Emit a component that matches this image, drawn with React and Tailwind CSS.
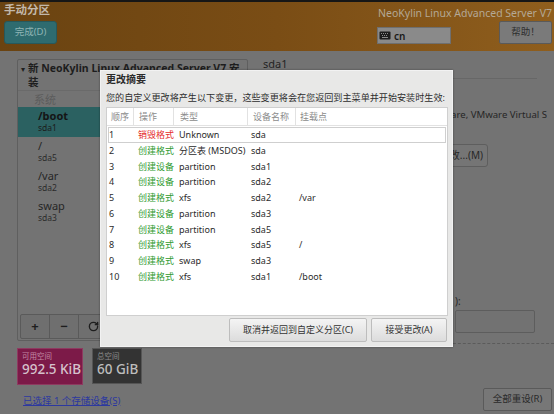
import React from "react";
import { RotateCw } from "lucide-react";

const rows = [
  ["1", "销毁格式", "Unknown", "sda", "", "red"],
  ["2", "创建格式", "分区表 (MSDOS)", "sda", ""],
  ["3", "创建设备", "partition", "sda1", ""],
  ["4", "创建设备", "partition", "sda2", ""],
  ["5", "创建格式", "xfs", "sda2", "/var"],
  ["6", "创建设备", "partition", "sda3", ""],
  ["7", "创建设备", "partition", "sda5", ""],
  ["8", "创建格式", "xfs", "sda5", "/"],
  ["9", "创建格式", "swap", "sda3", ""],
  ["10", "创建格式", "xfs", "sda1", "/boot"],
];

function Kbd() {
  return (
    <svg width="12" height="9" viewBox="0 0 12 9">
      <rect x="0.5" y="0.5" width="11" height="8" rx="1" fill="#1c1c1c" />
      <g fill="#8a8a8a">
        <rect x="2" y="2" width="1" height="1" />
        <rect x="4" y="2" width="1" height="1" />
        <rect x="6" y="2" width="1" height="1" />
        <rect x="8" y="2" width="1" height="1" />
        <rect x="3" y="4" width="1" height="1" />
        <rect x="5" y="4" width="1" height="1" />
        <rect x="7" y="4" width="1" height="1" />
        <rect x="3" y="6" width="6" height="1" />
      </g>
    </svg>
  );
}

export default function App() {
  return (
    <div className="relative w-[554px] h-[414px] overflow-hidden bg-[#737373] font-['Noto_Sans','Noto_Sans_CJK_SC',sans-serif]">
      {/* Header */}
      <div className="h-[51px] border-t-2 border-[#161616] bg-gradient-to-r from-[#6a4311] via-[#7a4d15] to-[#8f5e1d] flex justify-between pl-[4px] pr-[2px]">
        <div className="flex flex-col">
          <div className="text-[11.5px] leading-[14px] font-bold text-[#c2b8ab] mt-[1px]">手动分区</div>
          <div className="mt-[4px] w-[53px] h-[23px] rounded-[3px] bg-[#2e6b6f] border border-[#27585b] flex items-center justify-center text-[9.5px] text-[#8fb5b5]">
            完成(D)
          </div>
        </div>
        <div className="flex flex-col items-end">
          <div className="text-[10.5px] leading-[13px] text-[#b4a895] mt-[5px] whitespace-nowrap">
            NeoKylin Linux Advanced Server V7
          </div>
          <div className="flex items-end mt-[1px] gap-[48px]">
            <div className="w-[74px] h-[17px] bg-[#8a8a8a] border border-[#6f6f6f] flex items-center pl-[1px] gap-[3px] text-[10px] text-[#1a1a1a]">
              <Kbd />
              <span className="leading-none font-semibold">cn</span>
            </div>
            <div className="w-[53px] h-[23px] rounded-[2px] bg-[#7a7a7a] border border-[#5a5a5a] flex items-center justify-center text-[9.5px] text-[#2e2e2e]">
              帮助！
            </div>
          </div>
        </div>
      </div>

      {/* Body */}
      <div className="flex h-[363px]">
        {/* Left column */}
        <div className="pl-[17px] w-[248px] flex flex-col">
          <div className="mt-[8px] h-[282px] border border-[#5f5f5f] rounded-[2px] flex flex-col">
            <div className="border-b border-[#6a6a6a] pt-[1px] pb-[1px] flex">
              <span className="text-[8px] text-[#1f1f1f] ml-[3px] mr-[3px] mt-[2px]">▾</span>
              <div className="text-[10.5px] leading-[14px] font-bold text-[#1d1d1d] whitespace-nowrap">
                新 NeoKylin Linux Advanced Server V7 安<br />装
              </div>
            </div>
            <div className="pl-[16px] text-[11px] leading-[12px] text-[#5c5c5c] mt-[3px]">系统</div>
            <div className="mt-[1px] flex-1 flex flex-col">
              <div className="h-[30px] bg-[#2b6161] pl-[20px] pt-[2px]">
                <div className="text-[11px] leading-[13px] font-bold text-[#151515]">/boot</div>
                <div className="text-[8.5px] leading-[11px] text-[#1b1b1b]">sda1</div>
              </div>
              {[
                ["/", "sda5"],
                ["/var", "sda2"],
                ["swap", "sda3"],
              ].map(([m, d]) => (
                <div key={m} className="h-[30px] pl-[20px] pt-[2px]">
                  <div className="text-[11px] leading-[13px] text-[#262626]">{m}</div>
                  <div className="text-[8.5px] leading-[11px] text-[#2b2b2b]">{d}</div>
                </div>
              ))}
            </div>
            <div className="h-[25px] mx-[2px] mb-[1px] flex border border-[#5a5a5a] rounded-[2px] bg-[#6f6f6f]">
              <div className="w-[29px] flex items-center justify-center border-r border-[#5a5a5a] text-[13px] text-[#1e1e1e] font-bold">+</div>
              <div className="w-[29px] flex items-center justify-center border-r border-[#5a5a5a] text-[13px] text-[#1e1e1e] font-bold">−</div>
              <div className="w-[29px] flex items-center justify-center border-r border-[#5a5a5a]">
                <RotateCw size={11} strokeWidth={3} color="#1e1e1e" />
              </div>
            </div>
          </div>
          <div className="mt-[7px] flex gap-[9px]">
            <div className="w-[66px] h-[37px] bg-[#7c1a48] border border-[#8e3a60] pl-[4px] pt-[2px]">
              <div className="text-[7.5px] leading-[10px] text-[#c28aa4]">可用空间</div>
              <div className="text-[13.5px] leading-[17px] text-[#d6c2cc] font-medium">992.5 KiB</div>
            </div>
            <div className="w-[50px] h-[36px] bg-[#333333] border border-[#555555] pl-[4px] pt-[2px]">
              <div className="text-[7.5px] leading-[10px] text-[#8c8c8c]">总空间</div>
              <div className="text-[13.5px] leading-[17px] text-[#bdbdbd] font-medium">60 GiB</div>
            </div>
          </div>
          <div className="mt-[10px] pl-[6px] text-[9.5px] leading-[12px] text-[#2c38a0] underline whitespace-nowrap">
            已选择 1 个存储设备(S)
          </div>
        </div>

        {/* Right column */}
        <div className="flex-1 pl-[15px] flex flex-col">
          <div className="mt-[6px] text-[11px] leading-[14px] text-[#232323]">sda1</div>
          <div className="mt-[7px] w-[274px] border-b border-[#676767]"></div>
          <div className="mt-[29px] w-[284px] overflow-hidden whitespace-nowrap text-[9.6px] leading-[13px] text-[#262626] flex justify-end">
            <span>设备：VMware, VMware Virtual S</span>
          </div>
          <div className="mt-[23px] w-[225px] h-[23px] rounded-[3px] border border-[#5e5e5e] bg-[#757575] flex items-center justify-end pr-[4px] text-[10px] text-[#262626]">
            修改...(M)
          </div>
          <div className="flex-1"></div>
          <div className="flex flex-col items-end">
            <div className="w-[99px] text-[10px] leading-[12px] text-[#262626]">):</div>
            <div className="mt-[3px] w-[99px] flex justify-start">
              <div className="w-[80px] h-[23px] border border-[#5d5d5d] rounded-[2px] bg-[#727272]"></div>
            </div>
            <div className="mt-[10px] w-[101px] border-t border-dashed border-[#5b5b5b]"></div>
            <div className="mt-[44px] mr-[2px] w-[69px] h-[23px] rounded-[2px] border border-[#5a5a5a] bg-[#777777] flex items-center justify-center text-[9.5px] text-[#2a2a2a]">
              全部重设(R)
            </div>
            <div className="h-[3px]"></div>
          </div>
        </div>
      </div>

      {/* Dialog */}
      <div className="absolute left-[100px] top-[70px] w-[353px] h-[277px] bg-[#e8e8e7] border border-[#f2f2f2] shadow-[0_0_2px_rgba(0,0,0,0.4)] flex flex-col px-[5px]">
        <div className="mt-[2px] text-[10px] leading-[12px] font-bold text-[#2b2b2b]">更改摘要</div>
        <div className="mt-[7px] text-[9.1px] leading-[12px] text-[#2e2e2e] whitespace-nowrap">
          您的自定义更改将产生以下变更，这些变更将会在您返回到主菜单并开始安装时生效:
        </div>
        <div className="mt-[3px] w-[342px] h-[209px] bg-white border border-[#cfcfcf] flex flex-col">
          <div className="h-[18px] grid grid-cols-[27px_40px_74px_48px_1fr] border-b border-[#e2e2e2] text-[9px] text-[#8c8c8c] items-center">
            <div className="pl-[4px] h-full flex items-center border-r border-[#e2e2e2]">顺序</div>
            <div className="pl-[5px] h-full flex items-center border-r border-[#e2e2e2]">操作</div>
            <div className="pl-[6px] h-full flex items-center border-r border-[#e2e2e2]">类型</div>
            <div className="pl-[5px] h-full flex items-center border-r border-[#e2e2e2]">设备名称</div>
            <div className="pl-[4px] h-full flex items-center">挂载点</div>
          </div>
          <div className="px-[1px] pt-[1px]">
            {rows.map((r, i) => (
              <div
                key={r[0]}
                className={
                  "h-[15.75px] grid grid-cols-[29px_41px_72px_48px_1fr] items-center text-[9px] text-[#2b2b2b] whitespace-nowrap " +
                  (i === 0 ? "shadow-[inset_0_0_0_1px_#cfcfcf]" : "")
                }
              >
                <div className="pl-[1px]">{r[0]}</div>
                <div className={"pl-[1px] " + (r[5] === "red" ? "text-[#e52b2b]" : "text-[#2f9a2f]")}>{r[1]}</div>
                <div className="pl-[1px]">{r[2]}</div>
                <div className="pl-[1px]">{r[3]}</div>
                <div className="pl-[1px]">{r[4]}</div>
              </div>
            ))}
          </div>
        </div>
        <div className="mt-[2px] flex justify-end gap-[4px]">
          <div className="w-[138px] h-[24px] rounded-[2px] border border-[#bdbdbd] bg-gradient-to-b from-[#f4f4f4] to-[#dcdcdc] flex items-center justify-center text-[9px] text-[#333]">
            取消并返回到自定义分区(C)
          </div>
          <div className="w-[76px] h-[24px] rounded-[2px] border border-[#bdbdbd] bg-gradient-to-b from-[#f4f4f4] to-[#dcdcdc] flex items-center justify-center text-[9px] text-[#333]">
            接受更改(A)
          </div>
        </div>
      </div>
    </div>
  );
}
